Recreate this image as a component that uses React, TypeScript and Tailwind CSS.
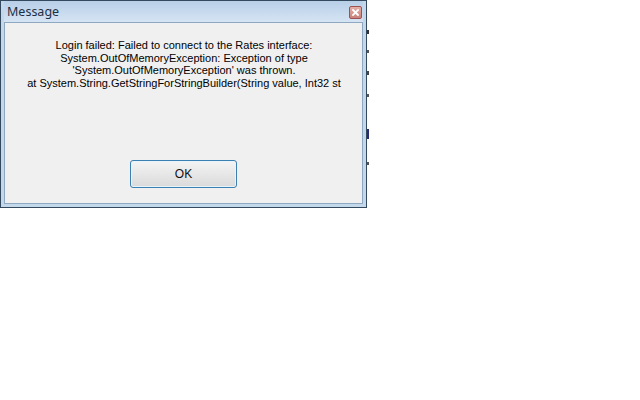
const lines = [
  "Login failed: Failed to connect to the Rates interface:",
  "System.OutOfMemoryException: Exception of type",
  "'System.OutOfMemoryException' was thrown.",
  "at System.String.GetStringForStringBuilder(String value, Int32 st",
];

// stray pixels of the window behind the dialog
const marks = [
  { cls: "mt-[30px] h-[4px] bg-[#333]" },
  { cls: "mt-[16px] h-[3px] bg-[#555]" },
  { cls: "mt-[18px] h-[4px] bg-[#444]" },
  { cls: "mt-[19px] h-[3px] bg-[#555]" },
  { cls: "mt-[32px] h-[10px] bg-[#2a2a70]" },
  { cls: "mt-[23px] h-[3px] bg-[#555]" },
];

export default function App() {
  return (
    <div className="w-[640px] h-[400px] bg-white flex items-start font-['Liberation_Sans',Arial,sans-serif]">
      <div className="w-[367px] h-[208px] border border-[#34495e] bg-[#c4d8ec] flex flex-col px-[3px] pb-[3px]">
        <div className="h-[21px] flex items-center justify-between pl-[3px] pr-[1px] pt-[2px] bg-gradient-to-b from-[#b7cfe8] to-[#d6e4f3]">
          <span className="text-[12.5px] text-[#1b2f45] font-['Noto_Sans','Liberation_Sans',sans-serif]">Message</span>
          <div className="w-[13px] h-[13px] rounded-[2px] border border-[#a05050] bg-gradient-to-b from-[#e3b0a8] to-[#c9827a] flex items-center justify-center">
            <svg width="7" height="7" viewBox="0 0 7 7">
              <path d="M1 1 L6 6 M6 1 L1 6" stroke="#ffffff" strokeWidth="1.8" strokeLinecap="square" />
            </svg>
          </div>
        </div>
        <div className="flex-1 bg-[#f0f0f0] border border-[#8fa8c2] flex flex-col items-center">
          <div className="pt-[16px] pl-[1px] text-[11px] leading-[12.5px] text-black text-center">
            {lines.map((l, i) => (
              <div key={i}>{l}</div>
            ))}
          </div>
          <button className="mt-auto mb-[15px] w-[107px] h-[28px] rounded-[3px] border border-[#3c7fb1] bg-gradient-to-b from-[#f4f4f4] to-[#dadada] text-[12px] text-[#111] shadow-[inset_0_0_0_1px_#e8f4fc]">
            OK
          </button>
        </div>
      </div>
      <div className="w-[2px] flex flex-col">
        {marks.map((m, i) => (
          <div key={i} className={`${m.cls} w-[2px]`} />
        ))}
      </div>
    </div>
  );
}
